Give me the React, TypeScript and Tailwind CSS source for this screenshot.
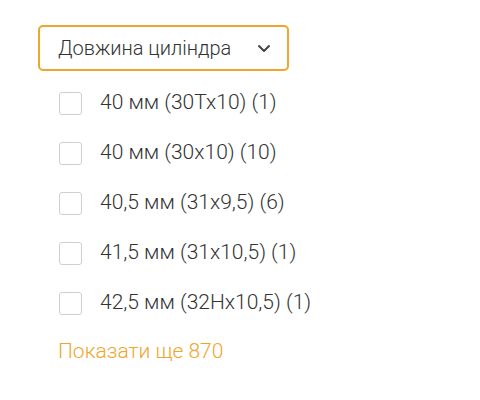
import React from "react";

const items = [
  "40 мм (30Тх10) (1)",
  "40 мм (30х10) (10)",
  "40,5 мм (31х9,5) (6)",
  "41,5 мм (31х10,5) (1)",
  "42,5 мм (32Нх10,5) (1)",
];

export default function App() {
  return (
    <div className="w-[480px] h-[400px] bg-white pl-[38px] pt-[25px] font-light" style={{ fontFamily: "Roboto, 'Noto Sans', sans-serif" }}>
      <button className="flex items-center w-[251px] h-[46px] border-2 border-[#f0a52c] rounded-[5px] pl-[18px] pr-[16px] text-[20px] font-light text-[#333333]">
        <span>Довжина циліндра</span>
        <svg className="ml-auto" width="14" height="9" viewBox="0 0 14 9" fill="none">
          <path d="M2 2l5 5 5-5" stroke="#444" strokeWidth="2" strokeLinecap="round" strokeLinejoin="round" />
        </svg>
      </button>
      <div className="flex flex-col pl-[21px] pt-[20px] gap-[26px]">
        {items.map((t) => (
          <label key={t} className="flex items-center h-[24px] text-[21px] text-[#333333]">
            <span className="w-[23px] h-[23px] border border-[#cfcfcf] rounded-[3px] bg-white" />
            <span className="ml-[18px]">{t}</span>
          </label>
        ))}
      </div>
      <div className="pl-[20px] pt-[21px] text-[21px] text-[#f0a52c]">Показати ще 870</div>
    </div>
  );
}
